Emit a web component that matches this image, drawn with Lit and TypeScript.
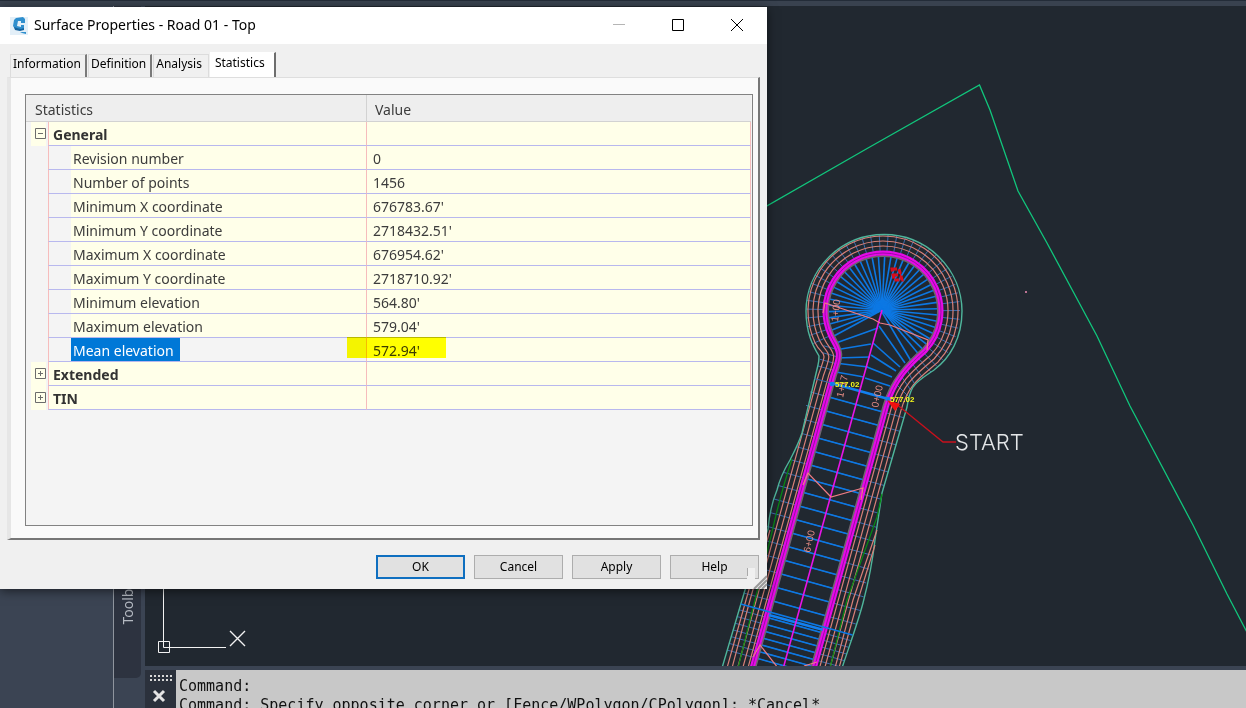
import { LitElement, html, svg, css } from "lit";
import { customElement, state } from "lit/decorators.js";

type Point = [number, number];

const toPath = (points: Point[]) =>
  points.map(([x, y], i) => `${i ? "L" : "M"}${x.toFixed(1)} ${y.toFixed(1)}`).join("");

/* Alignment geometry: start of the centre line, and its unit direction. */
const START: Point = [882, 310];
const DIR: Point = [-0.266, 0.964];
const at = (station: number, offset: number): Point => [
  START[0] + DIR[0] * station + DIR[1] * offset,
  START[1] + DIR[1] * station - DIR[0] * offset,
];

/* Daylight offsets by station, left and right of the centre line. */
const LEFT: Point[] = [[84, -47], [116, -48], [140, -44], [169, -49], [201, -54], [241, -53], [306, -58], [390, -59]];
const RIGHT: Point[] = [[84, 50], [176, 49], [224, 54], [261, 57], [288, 59], [390, 56]];
const interpolate = (table: Point[], s: number) => {
  let i = 1;
  while (i < table.length - 1 && table[i][0] < s) i++;
  const [s0, o0] = table[i - 1];
  const [s1, o1] = table[i];
  return o0 + ((o1 - o0) * (s - s0)) / (s1 - s0);
};

@customElement("site-drawing")
class SiteDrawing extends LitElement {
  static styles = css`
    :host { display: block; overflow: hidden; background: #212830; }
    svg { display: block; width: 100%; height: 100%; }
    .line { fill: none; }
    .boundary { stroke: #11c67c; stroke-width: 1.3; }
    .daylight { stroke: #4fb59b; stroke-width: 1.4; }
    .slope { stroke: #d98078; stroke-width: 1.2; }
    .ditch { stroke: #078a14; stroke-width: 1.2; }
    .curb { stroke: #e60be6; stroke-width: 5; }
    .curb-seam { stroke: #9a0aa8; stroke-width: 1; }
    .gutter { stroke: #6f6570; stroke-width: 2; }
    .center { stroke: #e814e8; stroke-width: 1.6; }
    .lane { stroke: #0c78e4; stroke-width: 1.6; }
    .station { stroke: #1280f0; stroke-width: 2.6; }
    .tick { stroke: #3a6cad; stroke-width: 1; }
    .contour { stroke: #ee7c84; stroke-width: 1.2; }
    .leader { stroke: #c8101c; stroke-width: 1.3; }
    .arrow { fill: #f01010; }
    .pink { fill: #e88d86; font: 10px "Liberation Sans", sans-serif; }
    .elev { fill: #f4f81c; font: bold 8px "Liberation Sans", sans-serif; }
    .block { fill: none; stroke: #d90c1c; stroke-width: 3; stroke-dasharray: 5 2; }
    .start { fill: #e4e6e8; font: 300 22px Inter, sans-serif; }
    .ucs { fill: none; stroke: #f2f2f2; stroke-width: 1; }
    .ucs-x { stroke-width: 1.4; }
    .dot { fill: #f08cb4; }
  `;

  private seg(cls: string, a: Point, b: Point) {
    return svg`<path class="line ${cls}" d=${toPath([a, b])}></path>`;
  }

  private offsetLine(r: number, side: number) {
    const cx = 883, cy = 311;
    const along = (s: number) => at(s, side);
    const end = along(390);
    if (side < 0) {
      const p = along(76 + (r - 58) * 0.2);
      const a = (155 * Math.PI) / 180;
      const q: Point = [cx + r * Math.cos(a), cy + r * Math.sin(a)];
      const k = along(48);
      return `M${cx} ${cy - r}A${r} ${r} 0 0 0 ${q[0]} ${q[1]}C${q[0] + 8} ${q[1] + 16} ${k[0] + 2} ${k[1] + 2} ${p[0]} ${p[1]}L${end[0]} ${end[1]}`;
    }
    const a = (43 * Math.PI) / 180;
    const q: Point = [cx + r * Math.cos(a), cy + r * Math.sin(a)];
    const p = along(92);
    const k = along(64);
    return `M${cx} ${cy - r}A${r} ${r} 0 0 1 ${q[0]} ${q[1]}C${q[0] - 16} ${q[1] + 14} ${k[0]} ${k[1]} ${p[0]} ${p[1]}L${end[0]} ${end[1]}`;
  }

  render() {
    const fan = [];
    for (let deg = -207; deg <= 52; deg += 6.6) {
      const a = (deg * Math.PI) / 180;
      fan.push(this.seg("lane", START, [883 + 55 * Math.cos(a), 311 + 55 * Math.sin(a)]));
    }
    const ring = [];
    for (let deg = -205; deg <= 48; deg += 6.6) {
      const a = (deg * Math.PI) / 180;
      const c = Math.cos(a), s = Math.sin(a);
      ring.push(this.seg("tick", [883 + 60 * c, 311 + 60 * s], [883 + 77 * c, 311 + 77 * s]));
    }
    const stations: number[] = [];
    for (let i = 1; i < 17; i++) stations.push(84 + i * 14.1);
    for (let s = 327; s < 375; s += 7) stations.push(s);
    const bars = stations.map((s) => [
      this.seg("tick", at(s, interpolate(LEFT, s)), at(s, interpolate(RIGHT, s))),
      this.seg("lane", at(s, -28), at(s, 28)),
    ]);
    const upper: [Point, Point][] = [
      [[878, 328], [836, 343]], [[871, 344], [835, 350]], [[870, 357], [836, 358]],
      [[868, 367], [835, 363]], [[864, 377], [836, 372]], [[879, 326], [905, 363]],
      [[873, 343], [900, 367]], [[871, 355], [896, 371]], [[867, 367], [892, 377]],
      [[865, 378], [890, 386]], [[882, 312], [911, 361]],
    ];
    return html`<svg role="img" aria-label="Road plan view">
      <g transform="translate(-145 -6)">
        <path class="line boundary" d="M760 210L868 148L979.500 85L990 110L1018 191L1047 243L1097 336L1130 406L1193 525L1227 594L1250 638"></path>
        ${ring}${bars}${fan}
        ${upper.map(([a, b]) => this.seg("lane", a, b))}
        ${[50, 57, 64, 71].map((s) => this.seg("tick", at(s, -47), at(s, -30)))}
        ${[[905, 366, 914, 383], [911, 362, 923, 378], [917, 357, 931, 372], [899, 373, 910, 389], [894, 382, 909, 397]].map(
          ([a, b, c, d]) => this.seg("tick", [a, b], [c, d])
        )}
        ${[65, 70, 75].map(
          (r, i) => svg`<path class="line slope" d=${this.offsetLine(r, [-34, -39, -44][i])}></path>
            <path class="line slope" d=${this.offsetLine(r, [35, 40, 45][i])}></path>`
        )}
        <path class="line daylight" d="M884 234.500A78 77 0 0 0 806 311C806 333 813 346 819 356C819 360 819 361 818 365L802 433C798 445 794 452 790 460C784 470 780 478 777 490C772 502 769 518 768 529L745 590L722 668"></path>
        <path class="line daylight" d="M884 234.500A78 77 0 0 1 962 311C962 338 950 358 934 370C925 376 917 381 913 387C909 394 908 400 907 407L882 493C880 506 878 520 875 540C872 566 869 580 863 603C858 622 852 638 842 668"></path>
        <path class="line ditch" d="M792 459C783 486 777 510 772 532L755 600L738 668"></path>
        <path class="line ditch" d="M882 494L877 517L847 600L830 668"></path>
        <path class="line slope" d="M770 530L750 600L732 668M766 530L746 600L727 668M877 530L853 600L835 668M875 545L858 600L839 668"></path>
        ${[-1, 1].map(
          (k) => svg`<path class="line gutter" d=${this.offsetLine(55, k * 27)}></path>
            <path class="line curb" d=${this.offsetLine(58, k * 30)}></path>
            <path class="line curb-seam" d=${this.offsetLine(58, k * 30)}></path>`
        )}
        ${this.seg("station", at(84, -28), at(84, 28))}
        ${this.seg("tick", at(84, -47), at(84, -30))}
        ${this.seg("station", at(324, -28), at(324, 28))}
        ${this.seg("lane", at(321, -58), at(321, 58))}
        ${this.seg("center", START, at(390, 0))}
        <path class="line contour" d="M823 313L825 303L873 319L880 323L890 325L928 340L927 350"></path>
        <path class="line contour" d="M803 485L808 473L831 497L863 488L861 500M753 657L760 645L778 668M804 666L817 662"></path>
        <circle class="station" cx="832" cy="384" r="1"></circle>
        <circle class="station" cx="888" cy="399" r="1"></circle>
        <path class="line leader" d="M895 403L943 442H956"></path>
        <path class="arrow" d="M887 400L900 404L895 411Z"></path>
        <path class="line block" d="M892 269H899L902 280H894ZM893 275H901"></path>
        <text class="pink" transform="translate(838 322) rotate(-84)">1+00</text>
        <text class="pink" transform="translate(843 398) rotate(-77)">1+17</text>
        <text class="pink" transform="translate(878 408) rotate(-77)">0+00</text>
        <text class="pink" transform="translate(810 553) rotate(-77)">6+00</text>
        <text class="elev" x="835" y="387">577.02</text>
        <text class="elev" x="890" y="402">577.02</text>
        <text class="start" x="955" y="450">START</text>
        <circle class="dot" cx="1026" cy="292" r="1"></circle>
        <path class="ucs" d="M163.500 580V647.500H226M158.500 641.500H169.500V652.500H158.500Z"></path>
        <path class="ucs ucs-x" d="M230 631L245 646M245 631L230 646"></path>
      </g>
    </svg>`;
  }
}

interface Group { name: string; open: boolean; rows: [string, string][]; }

@customElement("surface-dialog")
class SurfaceDialog extends LitElement {
  static styles = css`
    :host { display: flex; flex-direction: column; background: #f0f0f0; color: #000; box-shadow: 0 2px 10px rgb(0 0 0 / 55%); font: 12px/16px "Noto Sans", sans-serif; }
    button { font: inherit; color: inherit; margin: 0; padding: 0; }
    .title { display: flex; align-items: center; height: 37px; background: #fff; padding: 0 1px 0 10px; }
    .logo { width: 18px; height: 18px; margin-right: 6px; }
    h1 { flex: 1; margin: 0; padding-bottom: 2px; font: 400 14px/20px "Noto Sans", sans-serif; }
    .win { width: 59px; height: 37px; border: 0; background: none; display: grid; place-items: center; }
    .win svg { width: 14px; height: 14px; margin-bottom: 1px; fill: none; stroke: #000; }
    .win .faint { stroke: #b5b5b5; }
    .tabs { display: flex; align-items: flex-end; height: 33px; padding-left: 10px; }
    .tab { height: 23px; padding: 0 4px 4px 2px; border: 1px solid #dcdcdc; border-right: 2px solid #7a7a7a; border-bottom: 0; background: #f0f0f0; margin-right: 1px; }
    .tab.last { padding-right: 6px; border-right: 1px solid #dcdcdc; }
    .tab.on { height: 25px; padding: 0 9px 4px 4px; background: #fff; border-color: #fff #6e6e6e #fff #fff; }
    .page { flex: 1; display: flex; margin: 0 7px; padding: 16px 5px 12px 14px; background: #fafafa; border: solid; border-width: 1px 2px 2px 4px; border-color: #dedede #777 #777 #e6e6e6; }
    .frame { flex: 1; background: #f4f4f4; border: 1px solid #828282; padding-right: 1px; color: #3c3c3c; font-size: 14px; line-height: 20px; }
    table { width: 100%; border-spacing: 0; table-layout: fixed; }
    .c-gutter { width: 22px; }
    .c-name { width: 319px; }
    th, td { padding: 3px 0 0; height: 20px; text-align: left; font-weight: 400; white-space: nowrap; }
    thead th { height: 23px; background: #eee; border-bottom: 1px solid #d2d2d2; }
    thead .h-name { padding-left: 9px; border-right: 1px solid #d2d2d2; }
    thead .h-value { padding-left: 8px; }
    .gutter { padding: 1px 0 0 6px; vertical-align: top; }
    .group .gutter { background: linear-gradient(to right, #f4f4f4 5px, #ffffe9 5px, #ffffe9 20px, #f4f4f4 20px); }
    .toggle { display: block; width: 16px; height: 20px; border: 0; background: none; }
    .toggle svg { display: block; width: 11px; height: 11px; margin: 0 3px; fill: none; stroke: #6c6c6c; }
    .name { border-left: 1px solid #f6bcbc; border-right: 1px solid #f6bcbc; border-bottom: 1px solid #b8b8ee; background: #ffffe9; padding-left: 4px; }
    .group .name { font-weight: 700; color: #333; }
    .child .name { height: 23px; padding: 0 0 0 22px; vertical-align: top; background: linear-gradient(to right, #f4f4f4 22px, #ffffe9 22px); }
    .child .label { display: inline-block; height: 23px; line-height: 26px; padding: 0 6px 0 2px; vertical-align: top; }
    .child.picked .name { background: #f4f4f4; }
    .picked .label { background: #0078d7; color: #fff; }
    .value { border-right: 1px solid #f6bcbc; border-bottom: 1px solid #b8b8ee; background: #ffffe9; padding-left: 6px; }
    .picked .value { position: relative; }
    .picked .value::after { content: ""; position: absolute; left: -20px; top: -1px; width: 99px; height: 21px; background: #ff0; mix-blend-mode: multiply; }
    .actions { display: flex; justify-content: flex-end; gap: 9px; padding: 15px 8px 10px; position: relative; }
    .btn { width: 89px; height: 24px; border: 1px solid #adadad; background: #e1e1e1; }
    .btn.main { border: 2px solid #0f6fc0; }
    .grip { position: absolute; right: 0; bottom: 0; width: 22px; height: 22px; }
  `;

  @state() private groups: Group[] = [
    { name: "General", open: true, rows: [
      ["Revision number", "0"], ["Number of points", "1456"],
      ["Minimum X coordinate", "676783.67'"], ["Minimum Y coordinate", "2718432.51'"],
      ["Maximum X coordinate", "676954.62'"], ["Maximum Y coordinate", "2718710.92'"],
      ["Minimum elevation", "564.80'"], ["Maximum elevation", "579.04'"],
      ["Mean elevation", "572.94'"],
    ] },
    { name: "Extended", open: false, rows: [] },
    { name: "TIN", open: false, rows: [] },
  ];
  @state() private tab = "Statistics";

  private toggle(group: Group) {
    this.groups = this.groups.map((g) => (g === group ? { ...g, open: !g.open } : g));
  }

  render() {
    return html`
      <header class="title">
        <svg class="logo" viewBox="0 0 18 18" aria-hidden="true">
          <path fill="#e3eff8" d="M0 0H18V18H0Z"></path>
          <path fill="#2f8fce" d="M6 1L13 0L15 2V6H11V4H8L7 9L11 10V8H14V12L11 13L5 12L3 9L4 3Z"></path>
          <path fill="#14639f" d="M4 10L7 11L11 12L14 11V13L10 14L5 13Z"></path>
          <path fill="#2f8fce" d="M10 15H16V17L12 16Z"></path>
        </svg>
        <h1>Surface Properties - Road 01 - Top</h1>
        <button class="win" aria-label="Minimize"><svg><path class="faint" d="M1 6.500H13"></path></svg></button>
        <button class="win" aria-label="Maximize"><svg><path d="M1.500 1.500H12.500V12.500H1.500Z"></path></svg></button>
        <button class="win" aria-label="Close"><svg><path d="M1 1L13 13M13 1L1 13"></path></svg></button>
      </header>
      <div class="tabs" role="tablist">
        ${["Information", "Definition", "Analysis", "Statistics"].map(
          (t) => html`<button role="tab" class="tab ${t === this.tab ? "on" : t === "Analysis" ? "last" : ""}"
            aria-selected=${t === this.tab} @click=${() => (this.tab = t)}>${t}</button>`
        )}
      </div>
      <section class="page">
        <div class="frame">
          <table>
            <colgroup><col class="c-gutter"><col class="c-name"><col></colgroup>
            <thead><tr><th class="h-name" colspan="2">Statistics</th><th class="h-value">Value</th></tr></thead>
            <tbody>
              ${this.groups.map((g) => html`
                <tr class="group">
                  <td class="gutter"><button class="toggle" aria-label="Toggle ${g.name}" @click=${() => this.toggle(g)}>
                    <svg><path d=${g.open ? "M.5.5H10.500V10.500H.5ZM3 5.500H8" : "M.5.5H10.500V10.500H.5ZM3 5.500H8M5.500 3V8"}></path></svg>
                  </button></td>
                  <td class="name">${g.name}</td><td class="value"></td>
                </tr>
                ${g.open ? g.rows.map(([n, v]) => html`
                  <tr class="child ${n === "Mean elevation" ? "picked" : ""}">
                    <td class="gutter"></td>
                    <td class="name"><span class="label">${n}</span></td><td class="value">${v}</td>
                  </tr>`) : ""}
              `)}
            </tbody>
          </table>
        </div>
      </section>
      <footer class="actions">
        <button class="btn main">OK</button>
        <button class="btn">Cancel</button>
        <button class="btn">Apply</button>
        <button class="btn">Help</button>
        <svg class="grip" aria-hidden="true">
          <path fill="#f0f0f0" d="M2 1H10V13H2Z"></path>
          <path stroke="#aaa" d="M2.500 1V9"></path>
          <path stroke="#9a9a9a" stroke-width="2" d="M9 22L22 9M13 22L22 13M17 22L22 17"></path>
        </svg>
      </footer>`;
  }
}

@customElement("app-root")
class AppRoot extends LitElement {
  static styles = css`
    :host { display: flex; flex-direction: column; height: 100vh; position: relative; overflow: hidden; background: #3b4453; }
    .strip { height: 6px; flex: none; background: linear-gradient(#232c38 1px, #39424f 1px); }
    .body { flex: 1; min-height: 0; display: grid; grid-template-columns: 113px 32px 1fr; }
    .dock { border-left: 1px solid #8f959e; }
    .palette { box-sizing: border-box; display: flex; align-items: flex-end; justify-content: center; width: 27px; height: calc(100% - 30px); background: #2d3340; border-radius: 0 0 5px; padding-bottom: 53px; }
    .vertical { writing-mode: vertical-rl; transform: rotate(180deg); color: #b4b9c1; font: 14px/20px "Noto Sans", sans-serif; }
    .work { display: flex; flex-direction: column; min-width: 0; }
    site-drawing { flex: 1; min-height: 0; }
    .command { flex: none; height: 38px; border-top: 4px solid #3b4453; display: flex; background: #c8c8c8; overflow: hidden; }
    .handle { flex: none; width: 31px; background: #2b313c; display: flex; justify-content: center; }
    .handle svg { width: 24px; height: 38px; }
    .log { padding: 7px 3px 0; color: #111; font: 15px/19px "DejaVu Sans Mono", monospace; white-space: pre; }
    .log p { margin: 0; }
    surface-dialog { position: absolute; left: 0; top: 7px; width: 767px; height: 582px; }
  `;

  render() {
    return html`
      <div class="strip"></div>
      <main class="body">
        <aside></aside>
        <div class="dock"><div class="palette"><span class="vertical">Toolbox</span></div></div>
        <div class="work">
          <site-drawing></site-drawing>
          <div class="command">
            <div class="handle"><svg aria-hidden="true">
              <path stroke="#d8d8d8" stroke-width="2" stroke-dasharray="2 2" d="M1 6H23M1 10H23"></path>
              <path stroke="#e4e4e4" stroke-width="3" d="M5 21L15 31M15 21L5 31"></path>
            </svg></div>
            <div class="log"><p>Command:</p><p>Command: Specify opposite corner or [Fence/WPolygon/CPolygon]: *Cancel*</p></div>
          </div>
        </div>
      </main>
      <surface-dialog role="dialog" aria-label="Surface Properties"></surface-dialog>`;
  }
}
